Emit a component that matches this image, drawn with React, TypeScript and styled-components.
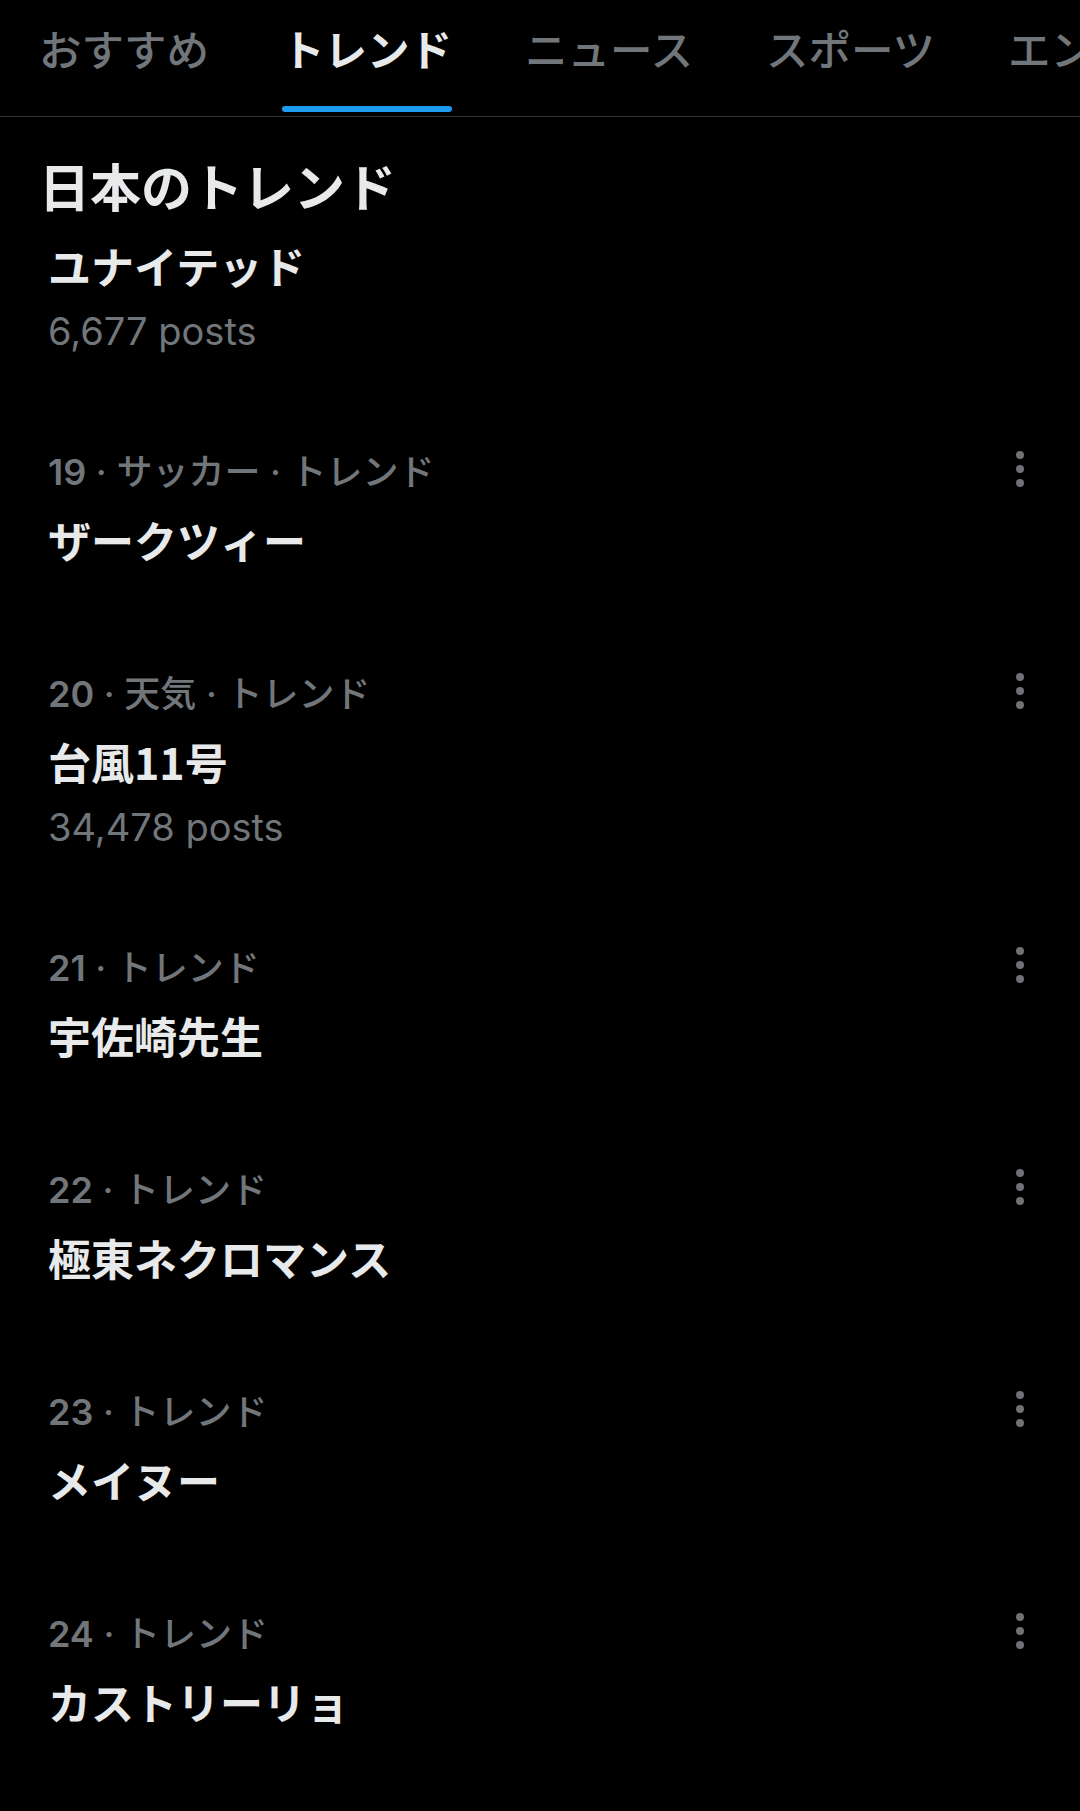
import React from 'react';
import styled, {createGlobalStyle} from 'styled-components';

interface Trend {
  rank?: number;
  category?: string;
  title: string;
  posts?: string;
}

const GlobalStyle = createGlobalStyle`
  html, body {
    margin: 0;
    padding: 0;
    background-color: #000;
  }
  body {
    font-family: Inter, "Noto Sans CJK JP", sans-serif;
    color: #e7e9ea;
  }
`;

const Page = styled.div`
  width: 1080px;
  min-height: 1811px;
  background-color: #000;
  overflow: hidden;
`;

const TabBar = styled.nav`
  display: flex;
  gap: 73px;
  height: 116px;
  padding-left: 39px;
  border-bottom: 1px solid #2f3336;
  overflow: hidden;
  white-space: nowrap;
`;

const Tab = styled.div`
  display: flex;
  flex-direction: column;
  flex-shrink: 0;
`;

const TabLabel = styled.div<{active?: boolean}>`
  padding-top: 18px;
  font-family: "Noto Sans CJK JP", sans-serif;
  font-size: 42.5px;
  line-height: 60px;
  font-weight: ${props => (props.active ? 700 : 500)};
  color: ${props => (props.active ? '#e7e9ea' : '#71767b')};
`;

const TabIndicator = styled.div`
  margin-top: auto;
  margin-bottom: 4px;
  height: 6px;
  border-radius: 3px;
  background-color: #1d9bf0;
`;

const SectionTitle = styled.h2`
  margin: 0;
  padding: 38px 0 0 39px;
  font-family: "Noto Sans CJK JP", sans-serif;
  font-size: 51px;
  line-height: 60px;
  font-weight: 700;
  color: #e7e9ea;
`;

const TrendList = styled.div`
  display: flex;
  flex-direction: column;
`;

const TrendItem = styled.div<{cut?: boolean}>`
  display: flex;
  flex-direction: column;
  padding: ${props => (props.cut ? '10px' : '41px')} 56px 41px 48px;
`;

const MetaRow = styled.div`
  display: flex;
  align-items: center;
  justify-content: space-between;
  height: 60px;
`;

const Meta = styled.div`
  font-size: 36px;
  font-weight: 500;
  color: #71767b;
  white-space: pre;
`;

const Rank = styled.span`
  font-weight: 600;
`;

const MoreButton = styled.div`
  display: flex;
  align-items: center;
  color: #6e7176;
`;

const TrendTitle = styled.div`
  font-family: "Noto Sans CJK JP", sans-serif;
  font-size: 43px;
  line-height: 80px;
  font-weight: 700;
  color: #e7e9ea;
`;

const PostCount = styled.div`
  font-size: 38px;
  line-height: 52px;
  color: #71767b;
`;

const tabs = ['おすすめ', 'トレンド', 'ニュース', 'スポーツ', 'エンタメ'];

const trends: Trend[] = [
  {title: 'ユナイテッド', posts: '6,677 posts'},
  {rank: 19, category: 'サッカー', title: 'ザークツィー'},
  {rank: 20, category: '天気', title: '台風11号', posts: '34,478 posts'},
  {rank: 21, title: '宇佐崎先生'},
  {rank: 22, title: '極東ネクロマンス'},
  {rank: 23, title: 'メイヌー'},
  {rank: 24, title: 'カストリーリョ'},
];

const Dots = () => (
  <svg width="8" height="36" viewBox="0 0 8 36" fill="currentColor">
    <circle cx="4" cy="4" r="4" />
    <circle cx="4" cy="18" r="4" />
    <circle cx="4" cy="32" r="4" />
  </svg>
);

const App = () => {
  const activeTab = 1;

  return (
    <Page>
      <GlobalStyle />
      <TabBar>
        {tabs.map((t, i) => (
          <Tab key={t}>
            <TabLabel active={i === activeTab}>{t}</TabLabel>
            {i === activeTab && <TabIndicator />}
          </Tab>
        ))}
      </TabBar>
      <SectionTitle>日本のトレンド</SectionTitle>
      <TrendList>
        {trends.map((tr, i) => (
          <TrendItem key={tr.title} cut={i === 0}>
            {tr.rank ? (
              <MetaRow>
                <Meta>
                  <Rank>{tr.rank}</Rank> · {tr.category ? `${tr.category} · ` : ''}トレンド
                </Meta>
                <MoreButton>
                  <Dots />
                </MoreButton>
              </MetaRow>
            ) : null}
            <TrendTitle>{tr.title}</TrendTitle>
            {tr.posts && <PostCount>{tr.posts}</PostCount>}
          </TrendItem>
        ))}
      </TrendList>
    </Page>
  );
};

export default App;
